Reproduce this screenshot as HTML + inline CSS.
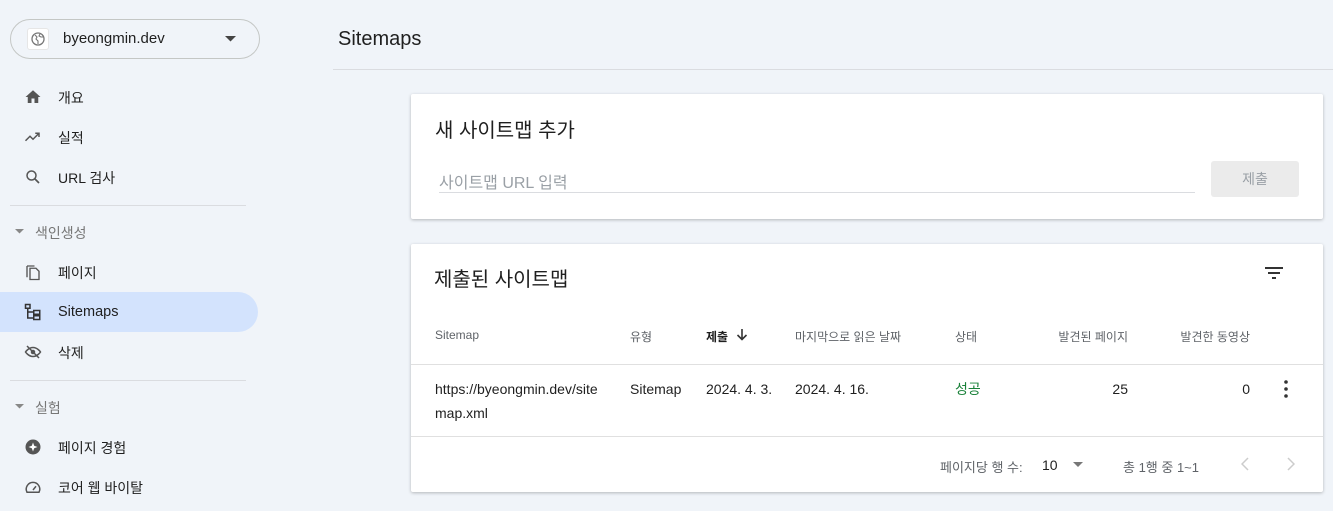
<!DOCTYPE html>
<html><head><meta charset="utf-8"><style>
*{box-sizing:border-box;margin:0;padding:0}
body{width:1333px;height:511px;overflow:hidden;background:#f0f4f9;font-family:"Liberation Sans","Noto Sans CJK KR",sans-serif;color:#1f1f1f;position:relative}
.a{position:absolute;white-space:nowrap}
.prop{left:10px;top:19px;width:250px;height:40px;border:1px solid #c4c7c5;border-radius:20px}
.nav{font-size:14px;color:#1f1f1f}
.ic{position:absolute;left:24px;width:18px;height:18px}
.sep{position:absolute;left:10px;width:236px;height:1px;background:#dadce0}
.card{position:absolute;left:411px;width:912px;background:#fff;border-radius:2px;box-shadow:0 1px 3px rgba(0,0,0,.25)}
.th{font-size:12px;color:#5f6368}
.td{font-size:14px;color:#1f1f1f}
</style></head><body>
<div class="a prop"></div>
<div class="a" style="left:27px;top:28px;width:22px;height:22px;background:#fff;border:1px solid #e6e6e6;border-radius:3px"></div>
<svg class="a" style="left:31px;top:32px" width="14" height="14" viewBox="0 0 14 14"><circle cx="7" cy="7" r="6" fill="none" stroke="#777" stroke-width="1.3"/><path d="M4 3l2 2-1 2 2 2v3M9 2l-1 2 2 1 2 0" fill="none" stroke="#777" stroke-width="1.1"/></svg>
<div class="a" style="left:63px;top:30px;font-size:15px;color:#1f1f1f">byeongmin.dev</div>
<svg class="a" style="left:225px;top:36px" width="12" height="6"><path d="M0 0h11L5.5 5.5z" fill="#444"/></svg>

<svg class="ic" style="top:88px" viewBox="0 0 24 24"><path d="M10 20v-6h4v6h5v-8h3L12 3 2 12h3v8z" fill="#555"/></svg>
<div class="a nav" style="left:58px;top:88px">개요</div>
<svg class="ic" style="top:128px" viewBox="0 0 24 24"><path d="M2 17l6-6 4 4 8-8M15 7h5v5" fill="none" stroke="#555" stroke-width="2"/></svg>
<div class="a nav" style="left:58px;top:128px">실적</div>
<svg class="ic" style="top:168px" viewBox="0 0 24 24"><circle cx="10" cy="10" r="6" fill="none" stroke="#555" stroke-width="2"/><path d="M14.5 14.5L20 20" stroke="#555" stroke-width="2.2"/></svg>
<div class="a nav" style="left:58px;top:168px">URL 검사</div>
<div class="sep" style="top:205px"></div>
<svg class="a" style="left:15px;top:229px" width="10" height="5"><path d="M0 0h9L4.5 4.5z" fill="#888"/></svg>
<div class="a" style="left:35px;top:223px;font-size:14px;color:#777">색인생성</div>
<svg class="ic" style="top:263px" viewBox="0 0 24 24"><path d="M4 4v15M4 4h10" fill="none" stroke="#555" stroke-width="1.8"/><path d="M8 7h8l4 4v11H8z" fill="none" stroke="#555" stroke-width="1.8"/></svg>
<div class="a nav" style="left:58px;top:263px">페이지</div>
<div class="a" style="left:0;top:292px;width:258px;height:40px;background:#d3e3fd;border-radius:0 20px 20px 0"></div>
<svg class="ic" style="top:303px" viewBox="0 0 24 24"><rect x="2" y="2" width="6" height="5" fill="none" stroke="#333" stroke-width="2"/><rect x="13" y="10" width="8" height="5" fill="none" stroke="#333" stroke-width="2"/><rect x="13" y="17" width="8" height="5" fill="none" stroke="#333" stroke-width="2"/><path d="M5 7v13h8M5 12h8" fill="none" stroke="#333" stroke-width="2"/></svg>
<div class="a nav" style="left:58px;top:304px;font-size:14.5px;color:#1f1f1f">Sitemaps</div>
<svg class="ic" style="top:343px" viewBox="0 0 24 24"><path d="M2 12s4-6 10-6 10 6 10 6-4 6-10 6S2 12 2 12z" fill="none" stroke="#555" stroke-width="2"/><circle cx="12" cy="12" r="3" fill="#555"/><path d="M4 4l16 16" stroke="#555" stroke-width="2"/></svg>
<div class="a nav" style="left:58px;top:343px">삭제</div>
<div class="sep" style="top:380px"></div>
<svg class="a" style="left:15px;top:404px" width="10" height="5"><path d="M0 0h9L4.5 4.5z" fill="#888"/></svg>
<div class="a" style="left:35px;top:398px;font-size:14px;color:#777">실험</div>
<svg class="ic" style="top:438px" viewBox="0 0 24 24"><circle cx="12" cy="12" r="10" fill="#555"/><path d="M12 6l1.6 4.4L18 12l-4.4 1.6L12 18l-1.6-4.4L6 12l4.4-1.6z" fill="#fff"/></svg>
<div class="a nav" style="left:58px;top:438px">페이지 경험</div>
<svg class="ic" style="top:478px" viewBox="0 0 24 24"><path d="M4 19a9 9 0 1 1 16 0z" fill="none" stroke="#555" stroke-width="2"/><path d="M12 16l4-5" stroke="#555" stroke-width="2"/></svg>
<div class="a nav" style="left:58px;top:478px">코어 웹 바이탈</div>

<div class="a" style="left:338px;top:28px;font-size:20px;color:#1f1f1f">Sitemaps</div>
<div class="a" style="left:333px;top:69px;width:1000px;height:1px;background:#dadce0"></div>

<div class="card" style="top:94px;height:125px">
 <div class="a" style="left:24px;top:20px;font-size:20px">새 사이트맵 추가</div>
 <div class="a" style="left:28px;top:75px;font-size:16px;color:#9aa0a6">사이트맵 URL 입력</div>
 <div class="a" style="left:28px;top:98px;width:756px;height:1px;background:#dadce0"></div>
 <div class="a" style="left:800px;top:67px;width:88px;height:36px;background:#ebebeb;border-radius:3px;font-size:14px;color:#9aa0a6;text-align:center;line-height:36px">제출</div>
</div>

<div class="card" style="top:244px;height:248px">
 <div class="a" style="left:23px;top:19px;font-size:20px">제출된 사이트맵</div>
 <svg class="a" style="left:854px;top:23px" width="18" height="13"><path d="M0 1h18M3 6h12M7 11h4" stroke="#333" stroke-width="2"/></svg>
 <div class="a th" style="left:24px;top:84px">Sitemap</div>
 <div class="a th" style="left:219px;top:84px">유형</div>
 <div class="a th" style="left:295px;top:84px;color:#1f1f1f;font-weight:bold">제출</div>
 <svg class="a" style="left:325px;top:84px" width="12" height="13"><path d="M6 1v10M1.5 7l4.5 4.5L10.5 7" fill="none" stroke="#333" stroke-width="1.6"/></svg>
 <div class="a th" style="left:384px;top:84px">마지막으로 읽은 날짜</div>
 <div class="a th" style="left:544px;top:84px">상태</div>
 <div class="a th" style="right:195px;top:84px">발견된 페이지</div>
 <div class="a th" style="right:73px;top:84px">발견한 동영상</div>
 <div class="a" style="left:0;top:120px;width:912px;height:1px;background:#e0e0e0"></div>
 <div class="a td" style="left:24px;top:133px;line-height:24px">https://byeongmin.dev/site<br>map.xml</div>
 <div class="a td" style="left:219px;top:133px;line-height:24px">Sitemap</div>
 <div class="a td" style="left:295px;top:133px;line-height:24px">2024. 4. 3.</div>
 <div class="a td" style="left:384px;top:133px;line-height:24px">2024. 4. 16.</div>
 <div class="a td" style="left:544px;top:133px;line-height:24px;color:#188038">성공</div>
 <div class="a td" style="right:195px;top:133px;line-height:24px">25</div>
 <div class="a td" style="right:73px;top:133px;line-height:24px">0</div>
 <svg class="a" style="left:873px;top:136px" width="4" height="18"><circle cx="2" cy="2" r="1.8" fill="#333"/><circle cx="2" cy="9" r="1.8" fill="#333"/><circle cx="2" cy="16" r="1.8" fill="#333"/></svg>
 <div class="a" style="left:0;top:192px;width:912px;height:1px;background:#e0e0e0"></div>
 <div class="a th" style="left:529px;top:213px;font-size:13px">페이지당 행 수:</div>
 <div class="a td" style="left:631px;top:213px">10</div>
 <svg class="a" style="left:662px;top:218px" width="11" height="6"><path d="M0 0h10L5 5z" fill="#777"/></svg>
 <div class="a th" style="left:712px;top:213px;font-size:13px">총 1행 중 1~1</div>
 <svg class="a" style="left:830px;top:213px" width="8" height="14"><path d="M7 1L1 7l6 6" fill="none" stroke="#ccc" stroke-width="1.5"/></svg>
 <svg class="a" style="left:876px;top:213px" width="8" height="14"><path d="M1 1l6 6-6 6" fill="none" stroke="#ccc" stroke-width="1.5"/></svg>
</div>
</body></html>
